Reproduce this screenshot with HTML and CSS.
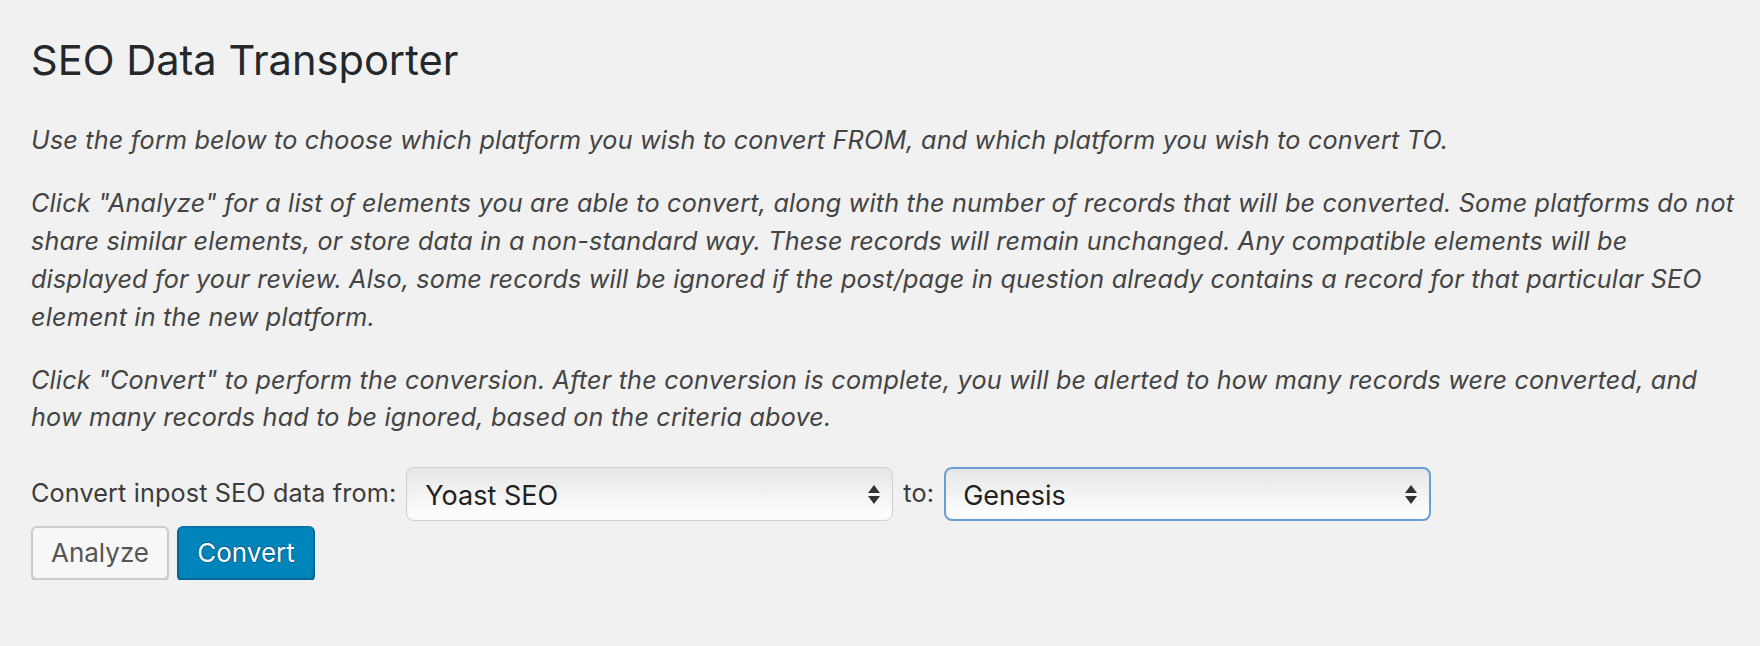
FILE: index.html
```html
<!DOCTYPE html>
<html>
<head>
    <title>SEO Data Transporter</title>
    <link rel="stylesheet" href="styles.css">
</head>
<body>
    <div class="wrap">

        <h1>SEO Data Transporter</h1>

        <p class="description">Use the form below to choose which platform you wish to convert FROM, and which platform you wish to convert TO.</p>

        <p class="description">Click "Analyze" for a list of elements you are able to convert, along with the number of records that will be converted. Some platforms do not share similar elements, or store data in a non-standard way. These records will remain unchanged. Any compatible elements will be displayed for your review. Also, some records will be ignored if the post/page in question already contains a record for that particular SEO element in the new platform.</p>

        <p class="description">Click "Convert" to perform the conversion. After the conversion is complete, you will be alerted to how many records were converted, and how many records had to be ignored, based on the criteria above.</p>

        <form id="transportForm">

            <div class="form-row">
                <label for="platformOld">Convert inpost SEO data from:</label>
                <div class="select-wrap">
                    <select id="platformOld" name="platform_old">
                        <option value="yoast" selected>Yoast SEO</option>
                        <option value="genesis">Genesis</option>
                        <option value="aioseo">All in One SEO Pack</option>
                    </select>
                    <svg class="select-arrows" width="12" height="19" viewBox="0 0 12 19">
                        <path d="M6 0 L12 8 L0 8 Z"/>
                        <path d="M0 11 L12 11 L6 19 Z"/>
                    </svg>
                </div>
                <label for="platformNew">to:</label>
                <div class="select-wrap is-focused">
                    <select id="platformNew" name="platform_new">
                        <option value="genesis" selected>Genesis</option>
                        <option value="yoast">Yoast SEO</option>
                        <option value="aioseo">All in One SEO Pack</option>
                    </select>
                    <svg class="select-arrows" width="12" height="19" viewBox="0 0 12 19">
                        <path d="M6 0 L12 8 L0 8 Z"/>
                        <path d="M0 11 L12 11 L6 19 Z"/>
                    </svg>
                </div>
            </div>

            <div class="form-actions">
                <button type="button" class="button" id="analyze">Analyze</button>
                <button type="submit" class="button button-primary" id="convert">Convert</button>
            </div>
        </form>

    </div>
</body>
</html>
```

FILE: styles.css
```css
body {
    margin: 0;
    background-color: #f1f1f1;
    color: #444444;
    font-family: Inter, "Noto Sans", sans-serif;
}

.wrap {
    padding: 32px 24px 0 31px;
}

h1 {
    margin: 0;
    padding: 0 0 9px;
    font-size: 41.6px;
    font-weight: 400;
    line-height: 56px;
    color: #23282d;
}

.description {
    margin: 25.2px 0;
    font-size: 25.2px;
    line-height: 37.8px;
    font-style: italic;
    letter-spacing: 0.18px;
}

#transportForm {
    margin-top: 30px;
}

.form-row {
    display: flex;
    align-items: center;
    column-gap: 10px;
}

.form-row label {
    font-size: 25.2px;
    letter-spacing: 0.14px;
    color: #3c3c3c;
    padding-bottom: 3px;
}

.select-wrap {
    display: flex;
    align-items: center;
    width: 487px;
    height: 54px;
    box-sizing: border-box;
    border: 1px solid #d0d0d0;
    border-radius: 8px;
    background: linear-gradient(#e6e6e6, #f3f3f3 50%, #ffffff);
    box-shadow: inset 0 -2px 3px rgba(0, 0, 0, 0.03);
}

.select-wrap.is-focused {
    border: 2px solid #6a9fd4;
}

.select-wrap select {
    flex: 1;
    height: 100%;
    padding: 3px 0 0 18px;
    border: none;
    background: transparent;
    appearance: none;
    -webkit-appearance: none;
    font-family: Inter, "Noto Sans", sans-serif;
    font-size: 27px;
    color: #222222;
    outline: none;
}

.is-focused select {
    padding-left: 17px;
}

.select-arrows {
    margin-right: 12px;
    fill: #333333;
}

.form-actions {
    display: flex;
    column-gap: 8px;
    margin-top: 5px;
}

.button {
    height: 54px;
    min-width: 138px;
    padding: 0 14px 2px;
    box-sizing: border-box;
    border: 2px solid #cccccc;
    border-radius: 6px;
    background-color: #f7f7f7;
    box-shadow: 0 2px 0 #cccccc;
    color: #555555;
    font-family: Inter, "Noto Sans", sans-serif;
    font-size: 26px;
    cursor: pointer;
}

.button-primary {
    background-color: #0085ba;
    border-color: #0073aa #006799 #006799;
    box-shadow: 0 2px 0 #006799;
    color: #ffffff;
    text-shadow: 0 -1px 1px #006799, 1px 0 1px #006799, 0 1px 1px #006799, -1px 0 1px #006799;
}
```
